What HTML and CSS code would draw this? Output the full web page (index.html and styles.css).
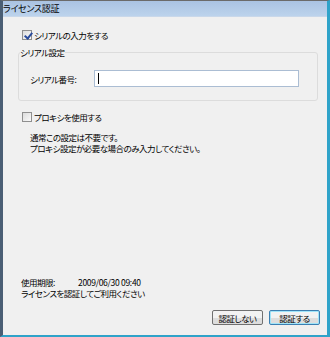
FILE: index.html
```html
<!DOCTYPE html>
<html lang="ja">
<head>
    <meta charset="UTF-8">
    <title>ライセンス認証</title>
    <link rel="stylesheet" href="styles.css">
</head>
<body>
    <div class="window">
        <div class="title-bar">ライセンス認証</div>
        <div class="client">
            <label class="check-row">
                <span class="checkbox checked"></span>シリアルの入力をする
            </label>

            <fieldset class="group">
                <legend>シリアル設定</legend>
                <div class="field-row">
                    <span class="field-label">シリアル番号:</span>
                    <div class="text-input"><span class="caret"></span></div>
                </div>
            </fieldset>

            <label class="check-row proxy">
                <span class="checkbox"></span>プロキシを使用する
            </label>
            <p class="note">通常この設定は不要です。<br>プロキシ設定が必要な場合のみ入力してください。</p>

            <div class="spacer"></div>

            <div class="expire-row">
                <span class="expire-label">使用期限:</span>
                <span class="expire-date">2009/06/30 09:40</span>
            </div>
            <p class="hint">ライセンスを認証してご利用ください</p>

            <div class="button-bar">
                <button class="btn">認証しない</button>
                <button class="btn default">認証する</button>
            </div>
        </div>
    </div>
</body>
</html>
```

FILE: styles.css
```css
* {
    box-sizing: border-box;
}
body {
    margin: 0;
    font-family: "Noto Sans CJK JP", "Noto Sans", sans-serif;
    font-size: 8.5px;
    letter-spacing: -0.5px;
    font-feature-settings: "palt";
    color: #000;
    background-color: #fff;
}
.window {
    width: 330px;
    height: 337px;
    display: flex;
    flex-direction: column;
    border-top: 1px solid #6b6b6b;
    border-left: 3px solid #4a5e74;
    border-right: 3px solid #2fa3c9;
    border-bottom: 2px solid #2fa3c9;
    background-color: #f0f0f0;
}
.title-bar {
    height: 16px;
    padding-left: 0;
    line-height: 15px;
    font-size: 9px;
    letter-spacing: -0.3px;
    background: linear-gradient(#aac3e3, #bcd3ec);
    border-bottom: 1px solid #c9d8ea;
}
.client {
    flex: 1;
    display: flex;
    flex-direction: column;
    padding: 12px 7px 10px 15px;
}
.check-row {
    display: flex;
    align-items: center;
    height: 12px;
    line-height: 12px;
    padding-left: 4px;
}
.checkbox {
    width: 10px;
    height: 10px;
    margin-right: 2px;
    border: 1px solid #8f8f8f;
    background: linear-gradient(135deg, #dcdcdc, #fafafa);
    position: relative;
}
.checkbox.checked::after {
    content: "";
    position: absolute;
    left: 3px;
    top: 0;
    width: 3px;
    height: 6px;
    border: solid #2b4c9c;
    border-width: 0 2px 2px 0;
    transform: rotate(40deg);
}
.group {
    margin: 5px 2px 0 0;
    padding: 3px 18px 13px 11px;
    border: 1px solid #dcdcdc;
    border-radius: 3px;
    min-width: 0;
}
.group legend {
    padding: 0;
    margin-left: -10px;
    line-height: 12px;
}
.field-row {
    display: flex;
    align-items: center;
    margin-top: 9px;
}
.field-label {
    width: 64px;
}
.text-input {
    flex: 1;
    height: 17px;
    background-color: #fff;
    border: 1px solid #abbdd3;
    padding: 2px 3px;
}
.caret {
    display: block;
    width: 1px;
    height: 11px;
    background-color: #000;
}
.proxy {
    margin-top: 10px;
}
.note {
    margin: 9px 0 0 12px;
    line-height: 11px;
}
.spacer {
    flex: 1;
}
.expire-row {
    display: flex;
    padding-left: 3px;
    line-height: 11px;
}
.expire-label {
    width: 57px;
}
.expire-date {
    letter-spacing: -0.3px;
}
.hint {
    margin: 0 0 0 3px;
    line-height: 11px;
}
.button-bar {
    display: flex;
    justify-content: flex-end;
    gap: 6px;
    margin-top: 11px;
}
.btn {
    width: 51px;
    height: 15px;
    padding: 0;
    font-family: inherit;
    font-size: 8.5px;
    letter-spacing: -0.5px;
    font-feature-settings: "palt";
    white-space: nowrap;
    border: 1px solid #707070;
    border-radius: 2px;
    background: linear-gradient(#f2f2f2 50%, #dddddd 50%);
}
.btn.default {
    border-color: #3c7fb1;
    box-shadow: inset 0 0 0 1px #a0e4f9;
}
```
